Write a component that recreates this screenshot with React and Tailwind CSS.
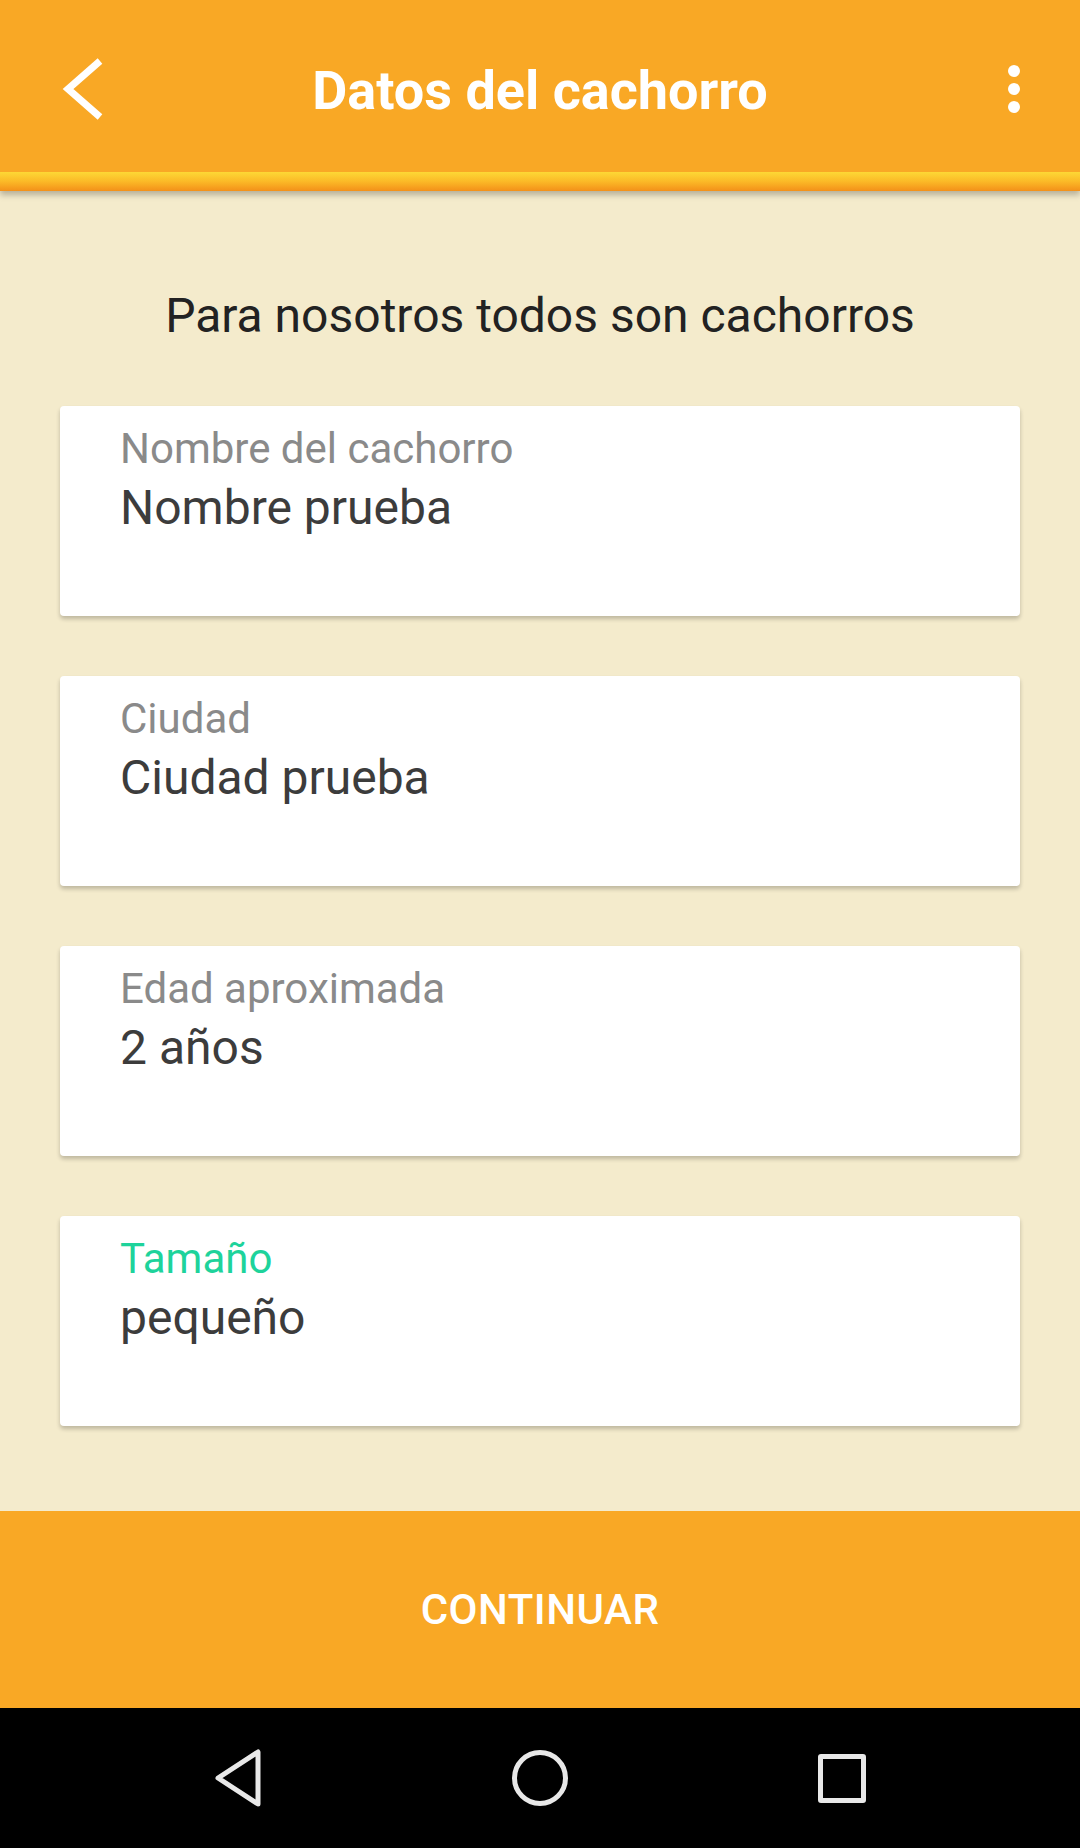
const fields = [
  { label: 'Nombre del cachorro', value: 'Nombre prueba' },
  { label: 'Ciudad', value: 'Ciudad prueba' },
  { label: 'Edad aproximada', value: '2 años' },
  { label: 'Tamaño', value: 'pequeño', active: true },
];

function Field({ label, value, active }) {
  return (
    <div className="h-[210px] bg-white rounded-[4px] shadow-[0_3px_4px_rgba(0,0,0,0.22)] pl-[60px] pt-[17px]">
      <div
        className={
          'text-[42px] leading-[52px] ' +
          (active ? 'text-[#1ed39b]' : 'text-[#8a8a8a]')
        }
      >
        {label}
      </div>
      <div className="text-[48px] leading-[60px] text-[#3c3c3c] mt-[3px]">{value}</div>
    </div>
  );
}

export default function App() {
  return (
    <div
      className="w-[1080px] h-[1848px] flex flex-col bg-[#f4ebcc] overflow-hidden"
      style={{ fontFamily: 'Roboto, "Noto Sans", sans-serif' }}
    >
      {/* Toolbar */}
      <div className="relative z-10 shadow-[0_4px_6px_rgba(0,0,0,0.25)]">
        <div className="h-[172px] bg-[#f9a825] flex items-start">
          <div className="w-[160px] pl-[58px] pt-[58px]">
            <svg width="46" height="62" viewBox="0 0 46 62">
              <path d="M42 3 L10 31 L42 59" fill="none" stroke="white" strokeWidth="7" />
            </svg>
          </div>
          <div className="flex-1 text-center text-white font-bold text-[54px] leading-[54px] pt-[64px]">
            Datos del cachorro
          </div>
          <div className="w-[160px] flex justify-end pr-[60px] pt-[65px]">
            <div className="flex flex-col gap-[6px]">
              <span className="w-[12px] h-[12px] rounded-full bg-white" />
              <span className="w-[12px] h-[12px] rounded-full bg-white" />
              <span className="w-[12px] h-[12px] rounded-full bg-white" />
            </div>
          </div>
        </div>
        <div className="h-[19px] bg-gradient-to-b from-[#fdd835] via-[#fbb927] to-[#f39019]" />
      </div>

      {/* Content */}
      <div className="flex-1 flex flex-col px-[60px]">
        <div className="text-center text-[48px] leading-[60px] text-[#222] mt-[95px] mb-[60px]">
          Para nosotros todos son cachorros
        </div>
        <div className="flex flex-col gap-[60px]">
          {fields.map((f) => (
            <Field key={f.label} {...f} />
          ))}
        </div>
      </div>

      {/* Continuar */}
      <button className="h-[197px] bg-[#f9a825] text-white text-[42px] font-medium tracking-[0.5px]">
        CONTINUAR
      </button>

      {/* Nav bar */}
      <div className="h-[140px] bg-black flex items-center justify-center">
        <div className="w-[302px] flex justify-center">
          <svg width="50" height="60" viewBox="0 0 50 60">
            <path d="M45 4 L45 56 L5 30 Z" fill="none" stroke="#e8e8e8" strokeWidth="5" strokeLinejoin="round" />
          </svg>
        </div>
        <div className="w-[302px] flex justify-center">
          <div className="w-[56px] h-[56px] rounded-full border-[5px] border-[#e8e8e8]" />
        </div>
        <div className="w-[302px] flex justify-center">
          <div className="w-[48px] h-[49px] rounded-[3px] border-[5px] border-[#e8e8e8]" />
        </div>
      </div>
    </div>
  );
}
